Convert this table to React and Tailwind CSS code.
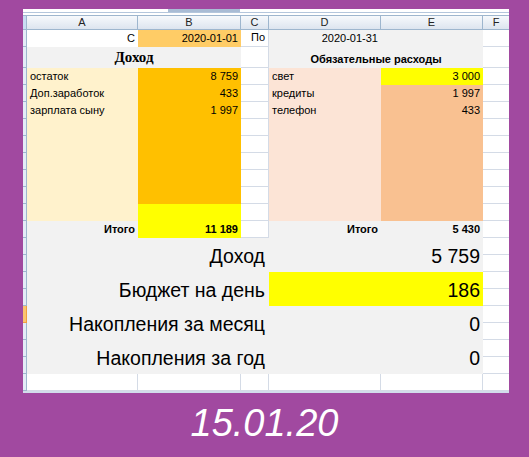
import React from 'react';

// column widths of the sheet (stub, A..F)
const W = {
  stub: 'w-[4px]',
  a: 'w-[111px]',
  b: 'w-[103px]',
  c: 'w-[28px]',
  d: 'w-[112px]',
  e: 'w-[102px]',
  f: 'w-[26px]',
};

const grid = 'bg-white border-r border-b border-[#d4dbe6]';
const txt = 'flex items-end pb-[2px] px-[3px] text-[11px] leading-[13px] shrink-0';

const Stub = ({ active }) => (
  <div
    className={`${W.stub} shrink-0 border-r border-b ${
      active ? 'bg-[#fbc46f] border-[#f0a040]' : 'bg-[#e4ecf7] border-[#9eb6ce]'
    }`}
  />
);

const rows = [
  { a: 'остаток', b: '8 759', d: 'свет', e: '3 000', eYellow: true },
  { a: 'Доп.заработок', b: '433', d: 'кредиты', e: '1 997' },
  { a: 'зарплата сыну', b: '1 997', d: 'телефон', e: '433' },
  {},
  {},
  {},
  {},
  {},
  { bYellow: true },
];

const big = [
  { label: 'Доход', value: '5 759' },
  { label: 'Бюджет на день', value: '186', yellow: true },
  { label: 'Накопления за месяц', value: '0', active: true },
  { label: 'Накопления за год', value: '0' },
];

export default function App() {
  return (
    <div
      className="w-[529px] h-[457px] bg-[#a149a0] overflow-hidden"
      style={{ fontFamily: '"Liberation Sans", Arial, sans-serif' }}
    >
      <div className="ml-[23px] mt-[9px] w-[486px] text-black">
        {/* top strip */}
        <div className="h-[6px] bg-white flex flex-col">
          <div className="h-[3px] flex">
            <div className="ml-[145px] w-[72px] bg-[#a9bcd5]" />
          </div>
          <div className="h-[1px] bg-[#b4c6dc]" />
        </div>

        {/* column header */}
        <div className="flex h-[15px] border-y border-[#9eb6ce] text-[11px] leading-[13px] text-[#222]">
          <div className={`${W.stub} shrink-0 bg-[#c9dcf2] border-r border-[#9eb6ce]`} />
          {[
            [W.a, 'A'],
            [W.b, 'B'],
            [W.c, 'C'],
            [W.d, 'D'],
            [W.e, 'E'],
            [W.f, 'F'],
          ].map(([w, l]) => (
            <div
              key={l}
              className={`${w} shrink-0 flex items-center justify-center border-r border-[#9eb6ce] bg-gradient-to-b from-[#f7f9fc] to-[#dde5ef] last:border-r-0`}
            >
              {l}
            </div>
          ))}
        </div>

        {/* row 1 */}
        <div className="flex h-[17px]">
          <Stub />
          <div className={`${W.a} ${txt} justify-end bg-white`}>С</div>
          <div className={`${W.b} ${txt} justify-end bg-[#ffcc66]`}>2020-01-01</div>
          <div className={`${W.c} ${txt} justify-end ${grid}`}>По</div>
          <div className={`${W.d} ${txt} justify-end bg-[#f2f2f2]`}>2020-01-31</div>
          <div className={`${W.e} shrink-0 bg-[#f2f2f2]`} />
          <div className={`${W.f} shrink-0 ${grid} border-r-0`} />
        </div>

        {/* row 2 */}
        <div className="flex h-[21px]">
          <Stub />
          <div
            className="w-[214px] shrink-0 bg-[#f2f2f2] flex items-end justify-center pb-[2px] text-[15px] leading-[17px] font-bold"
            style={{ fontFamily: '"Liberation Serif", "Times New Roman", serif' }}
          >
            Доход
          </div>
          <div className={`${W.c} shrink-0 ${grid}`} />
          <div className="w-[214px] shrink-0 bg-[#f2f2f2] flex items-end justify-center pb-[2px] text-[11px] leading-[13px] font-bold">
            Обязательные расходы
          </div>
          <div className={`${W.f} shrink-0 ${grid} border-r-0`} />
        </div>

        {/* rows 3-11 */}
        {rows.map((r, i) => (
          <div key={i} className="flex h-[17px]">
            <Stub />
            <div className={`${W.a} ${txt} bg-[#fff2cc]`}>{r.a}</div>
            <div className={`${W.b} ${txt} justify-end ${r.bYellow ? 'bg-[#ffff00]' : 'bg-[#ffc000]'}`}>
              {r.b}
            </div>
            <div className={`${W.c} shrink-0 ${grid}`} />
            <div className={`${W.d} ${txt} bg-[#fce4d6]`}>{r.d}</div>
            <div className={`${W.e} ${txt} justify-end ${r.eYellow ? 'bg-[#ffff00]' : 'bg-[#f9c191]'}`}>
              {r.e}
            </div>
            <div className={`${W.f} shrink-0 ${grid} border-r-0`} />
          </div>
        ))}

        {/* totals */}
        <div className="flex h-[17px] font-bold">
          <Stub />
          <div className={`${W.a} ${txt} justify-end bg-[#f2f2f2]`}>Итого</div>
          <div className={`${W.b} ${txt} justify-end bg-[#ffff00]`}>11 189</div>
          <div className={`${W.c} shrink-0 ${grid}`} />
          <div className={`${W.d} ${txt} justify-end bg-[#f2f2f2]`}>Итого</div>
          <div className={`${W.e} ${txt} justify-end bg-[#f2f2f2]`}>5 430</div>
          <div className={`${W.f} shrink-0 ${grid} border-r-0`} />
        </div>

        {/* summary */}
        {big.map((r) => (
          <div key={r.label} className="flex h-[34px]">
            <div className="flex flex-col">
              <div className="h-[17px] flex">
                <Stub active={r.active} />
              </div>
              <div className="h-[17px] flex">
                <Stub />
              </div>
            </div>
            <div className="w-[242px] shrink-0 bg-[#f2f2f2] flex items-center justify-end pr-[4px] pt-[2px] text-[19.5px] leading-[24px]">
              {r.label}
            </div>
            <div
              className={`w-[214px] shrink-0 flex items-center justify-end pr-[3px] pt-[2px] text-[19.5px] leading-[24px] ${
                r.yellow ? 'bg-[#ffff00]' : 'bg-[#f2f2f2]'
              }`}
            >
              {r.value}
            </div>
            <div className="flex flex-col">
              <div className={`h-[17px] ${W.f} ${grid} border-r-0`} />
              <div className={`h-[17px] ${W.f} ${grid} border-r-0`} />
            </div>
          </div>
        ))}

        {/* empty row */}
        <div className="flex h-[17px]">
          <Stub />
          <div className={`${W.a} shrink-0 ${grid}`} />
          <div className={`${W.b} shrink-0 ${grid}`} />
          <div className={`${W.c} shrink-0 ${grid}`} />
          <div className={`${W.d} shrink-0 ${grid}`} />
          <div className={`${W.e} shrink-0 ${grid}`} />
          <div className={`${W.f} shrink-0 ${grid} border-r-0`} />
        </div>
        <div className="h-[2px] bg-[#d2dceb]" />
      </div>

      <div className="mt-[11px] text-center text-white italic text-[38px] leading-[38px]">
        15.01.20
      </div>
    </div>
  );
}
